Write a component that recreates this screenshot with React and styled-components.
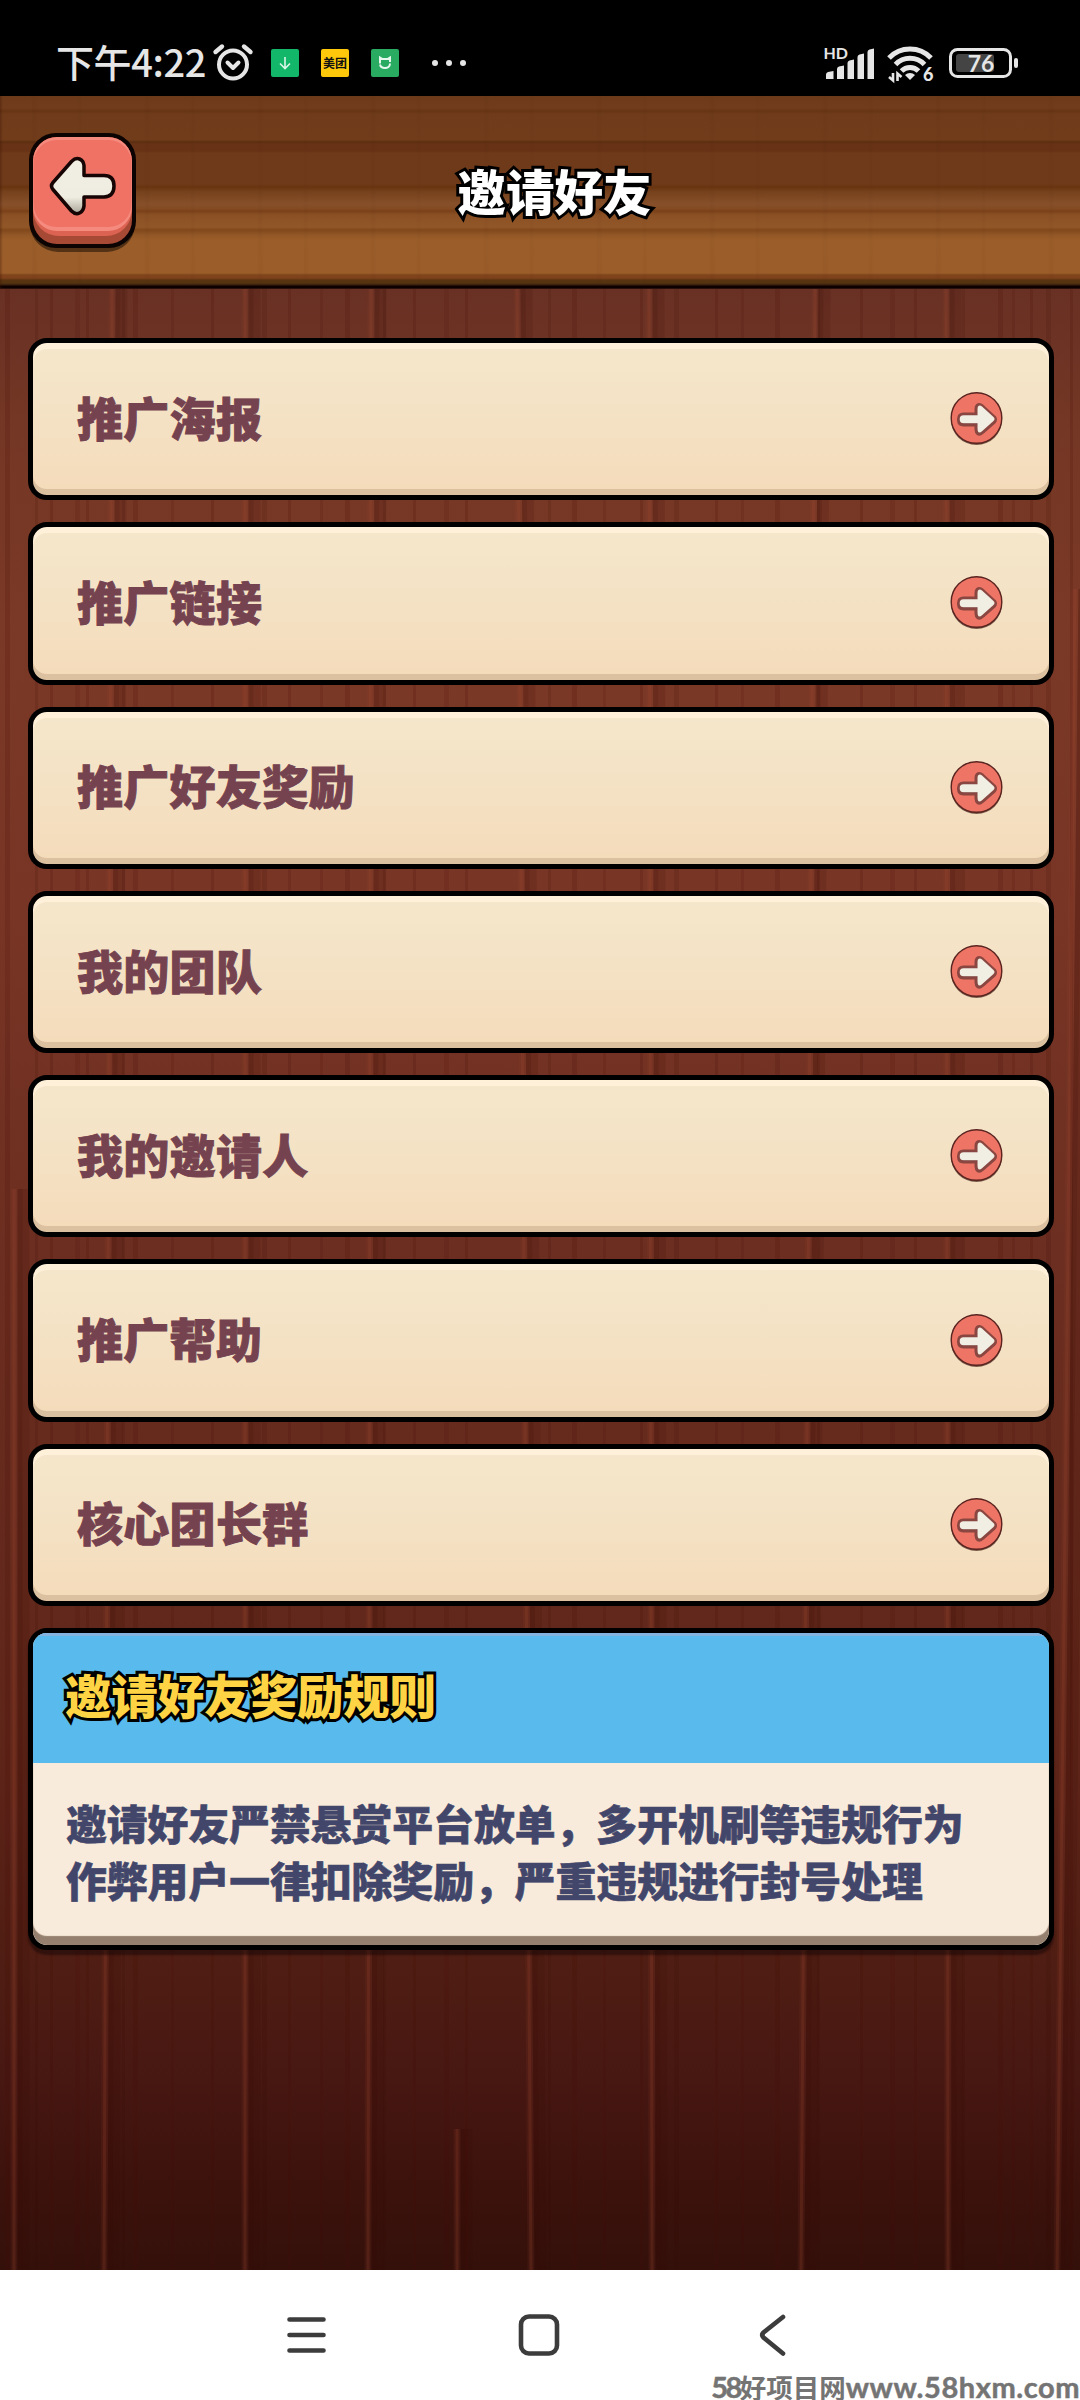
import React from 'react';
import styled, { createGlobalStyle } from 'styled-components';

const GlobalStyle = createGlobalStyle`
  * {
    box-sizing: border-box;
  }
  body {
    margin: 0;
    background: #fff;
    font-family: 'Noto Sans CJK SC', 'Noto Sans', sans-serif;
  }
`;

const Screen = styled.div`
  display: flex;
  flex-direction: column;
  width: 1080px;
  height: 2400px;
`;

const StatusBar = styled.div`
  display: flex;
  align-items: center;
  height: 96px;
  padding: 30px 62px 0 56px;
  background: #000;
  color: #e6e6e6;
  svg {
    display: block;
    flex: none;
    overflow: visible;
  }
`;

const Time = styled.div`
  width: 157px;
  padding-bottom: 4px;
  font-size: 38px;
  line-height: 56px;
  font-weight: 500;
  white-space: nowrap;
  letter-spacing: -0.4px;
`;

const AppBadge = styled.div`
  display: flex;
  align-items: center;
  justify-content: center;
  width: 28px;
  height: 28px;
  margin-left: ${(props) => props.$gap}px;
  border-radius: 2px;
  background: ${(props) => props.$color};
  color: #111;
  font-size: 12px;
  font-weight: 700;
  line-height: 28px;
  white-space: nowrap;
`;

const MoreDots = styled.div`
  display: flex;
  gap: 8px;
  margin-left: 33px;
`;

const Dot = styled.span`
  width: 6px;
  height: 6px;
  border-radius: 50%;
  background: #e6e6e6;
`;

const StatusIcons = styled.div`
  display: flex;
  align-items: center;
  gap: 10px;
  margin-left: auto;
`;

const Header = styled.header`
  display: grid;
  grid-template-columns: 140px 1fr 140px;
  height: 193px;
  padding: 37px 0 0 29px;
  background:
    linear-gradient(90deg, rgba(60, 20, 5, 0.35) 0, rgba(60, 20, 5, 0) 3px),
    repeating-linear-gradient(
      90deg,
      rgba(60, 20, 0, 0) 0 31px,
      rgba(60, 20, 0, 0.035) 33px 35px,
      rgba(60, 20, 0, 0) 38px 77px,
      rgba(60, 20, 0, 0.03) 79px 80px,
      rgba(60, 20, 0, 0) 83px 113px
    ),
    linear-gradient(
      #6d3a19 0,
      #713c1b 12px,
      #673414 15px,
      #6f3b1a 18px,
      #713c1a 44px,
      #5b2d10 46px,
      #673215 48px,
      #673215 55px,
      #6f3a19 57px,
      #6f3a19 88px,
      #683410 91px,
      #74401b 95px,
      #87502a 108px,
      #844b22 113px,
      #7a4119 115px,
      #8b5125 119px,
      #925727 131px,
      #81481c 134px,
      #925726 139px,
      #9b5e2a 144px,
      #9b5d29 177px,
      #80441c 179px,
      #7f421b 182px,
      #5b3410 184px,
      #543411 187px,
      #3a1e0c 189px,
      #0c0100 190px,
      #0c0100 192px,
      #4a211a 193px
    );
`;

const BackButton = styled.button`
  display: block;
  width: 107px;
  height: 120px;
  padding: 0;
  border: none;
  background: none;
  svg {
    display: block;
  }
`;

const Title = styled.h1`
  margin: 0;
  padding: 21px 0 0;
  text-align: center;
  color: #fff;
  font-size: 48.6px;
  line-height: 72px;
  font-weight: 900;
`;

// black rim painted under the fill
const Rim = styled.span`
  display: grid;
  justify-content: ${(props) => props.$align || 'start'};
  -webkit-text-stroke: 6px #000;
  paint-order: stroke fill;
  text-shadow: 0 1px 0 #000;
`;

const MenuRow = styled.div`
  position: relative;
  display: flex;
  align-items: center;
  justify-content: space-between;
  height: 162.3px;
  padding: 0 46px 0 44px;
  border: 5px solid #000;
  border-radius: 19px;
  background: linear-gradient(#f5e7cb, #f4e2c5 45%, #f4dbba);
  box-shadow: inset 0 6px 0 #fff0da, inset 0 -6px 0 #dcc1a0;
`;

const MenuLabel = styled.div`
  padding-bottom: 7px;
  color: #75424f;
  font-size: 46px;
  line-height: 60px;
  font-weight: 900;
  letter-spacing: 0.3px;
  -webkit-text-stroke: 0.9px #75424f;
`;

const Body = styled.main`
  position: relative;
  display: flex;
  flex-direction: column;
  gap: 22px;
  height: 1981px;
  padding: 49px 26px 0 28px;
  background: linear-gradient(
    #693124 0,
    #6d3324 60px,
    #753725 140px,
    #7a3826 330px,
    #783525 620px,
    #6c2e20 960px,
    #62281b 1320px,
    #5c2318 1500px,
    #4f1d13 1680px,
    #471712 1790px,
    #3c120c 1900px,
    #34100b 1981px
  );
`;

const Planks = styled.svg`
  position: absolute;
  left: 0;
  top: 0;
`;

const RuleCard = styled.section`
  position: relative;
  height: 322px;
  border: 5px solid #000;
  border-radius: 19px;
  overflow: hidden;
  background: #f9ebdb;
  box-shadow: 0 5px 2px rgba(20, 5, 5, 0.5);
`;

const RuleTitle = styled.h2`
  height: 130px;
  margin: 0;
  padding: 25px 0 0 32px;
  background: #58baed;
  box-shadow: inset 0 3px 0 #85b3e0;
  color: #ffd444;
  font-size: 46.4px;
  line-height: 72px;
  font-weight: 900;
`;

const RuleText = styled.div`
  height: 182px;
  padding: 31px 32px 0 33px;
  box-shadow: inset 0 -9px 1px #95806f;
  border-radius: 0 0 14px 14px;
  color: #42466a;
  font-size: 40.8px;
  line-height: 57px;
  font-weight: 900;
  white-space: nowrap;
  -webkit-text-stroke: 0.6px #42466a;
`;

const NavBar = styled.nav`
  position: relative;
  display: flex;
  align-items: flex-start;
  height: 130px;
  padding: 40px 0 0 281px;
  gap: 183px;
  background: #fff;
`;

const Watermark = styled.div`
  position: absolute;
  right: 0;
  bottom: 0;
  display: flex;
  align-items: center;
  height: 27px;
  color: #747474;
  font-size: 26.5px;
  line-height: 27px;
  font-weight: 700;
  white-space: nowrap;
`;

const Latin = styled.span`
  font-family: Lato, sans-serif;
  font-size: 29px;
  letter-spacing: ${(props) => props.$spacing}px;
  -webkit-text-stroke: 0.5px #747474;
`;

const menus = [
  '推广海报',
  '推广链接',
  '推广好友奖励',
  '我的团队',
  '我的邀请人',
  '推广帮助',
  '核心团长群',
];

// bright seam between two planks: x at the top, x at the bottom, start y
const seams = [
  [14, 14, 900],
  [112, 104, 0],
  [245, 245, 0],
  [371, 368, 0],
  [517, 531, 0],
  [649, 652, 0],
  [815, 801, 0],
  [946, 948, 0],
  [1075, 1057, 300],
  [457, 457, 1840],
];
// thin grain lines inside the planks
const grain = [
  5, 35, 50, 75, 86, 122, 133, 171, 211, 262, 288, 320, 345, 383, 413, 444, 465,
  548, 572, 603, 640, 674, 715, 741, 775, 817, 860, 890, 914, 962, 998, 1012,
  1030, 1046, 1070,
];

const WoodPlanks = () => (
  <Planks width="1080" height="1981" viewBox="0 0 1080 1981">
    {grain.map((x, i) => (
      <rect
        key={x}
        x={x}
        y="0"
        width={i % 3 === 0 ? 5 : 3}
        height="1981"
        fill={i % 4 === 1 ? '#320800' : '#4a0c06'}
        opacity={i % 2 ? 0.12 : 0.17}
      />
    ))}
    {seams.map(([top, bottom, start]) => (
      <g key={top}>
        <path d={`M${top} ${start}L${bottom} 1981`} stroke="#a04a34" strokeWidth="7" opacity="0.1" />
        <path d={`M${top} ${start}L${bottom} 1981`} stroke="#a3492f" strokeWidth="3" opacity="0.2" />
        <path d={`M${top + 6} ${start}L${bottom + 6} 1981`} stroke="#330600" strokeWidth="5" opacity="0.24" />
        <path d={`M${top + 12} ${start}L${bottom + 12} 1981`} stroke="#330600" strokeWidth="7" opacity="0.12" />
      </g>
    ))}
  </Planks>
);

const AlarmIcon = () => (
  <svg width="40" height="38" viewBox="0 0 40 38" fill="none" stroke="#e6e6e6">
    <circle cx="20" cy="20.500" r="14" strokeWidth="4" />
    <path d="M14.500 18.500l5.500 5.500 5.500-5.500" strokeWidth="4" strokeLinecap="round" strokeLinejoin="round" />
    <path d="M2.500 8L9 2.500M37.500 8L31 2.500" strokeWidth="4.400" strokeLinecap="round" />
  </svg>
);

const SignalIcon = () => (
  <svg width="54" height="40" viewBox="823 43 54 40" fill="#e6e6e6">
    <text x="824.500" y="59" fontSize="16" fontWeight="700" fontFamily="Lato, sans-serif">HD</text>
    <path d="M827 79v-4.500q0-2 2-2.500l5.500-1v8zM838 79v-10q0-2 2-2.500l5-1v13.500zM848.500 79v-16q0-2 2-2.500l4.500-1v19.500zM858.500 79v-22q0-2 2-2.500l4.500-1v25.500zM868.500 79v-27q0-2 2-2.500l4.500-1v30.500z" />
  </svg>
);

const WifiIcon = () => (
  <svg width="52" height="40" viewBox="887 43 52 40" fill="none" stroke="#e6e6e6">
    <path d="M890 58a29 29 0 0 1 42 0" strokeWidth="5" />
    <path d="M896.500 64.500a20 20 0 0 1 29 0" strokeWidth="5" />
    <path d="M902.500 71a12 12 0 0 1 17 0" strokeWidth="5" />
    <path d="M906 75l5 5 5-5a7.500 7.500 0 0 0-10 0z" fill="#e6e6e6" stroke="none" />
    <path d="M894 73v7.500l-4-3.500M898.500 81v-7.500l4 3.500" strokeWidth="2.600" />
    <text x="924" y="81" fontSize="18" fontWeight="900" fill="#e6e6e6" stroke="none" fontFamily="Lato, sans-serif">6</text>
  </svg>
);

const BatteryIcon = () => (
  <svg width="70" height="32" viewBox="948 47 70 32">
    <rect x="950.500" y="49.500" width="60" height="27" rx="7" fill="none" stroke="#e6e6e6" strokeWidth="3" />
    <rect x="956" y="54" width="38" height="18" rx="3" fill="#444" />
    <rect x="1014" y="58" width="4" height="10" rx="2" fill="#e6e6e6" />
    <text x="981" y="72" fontSize="23" fontWeight="700" textAnchor="middle" fill="#e6e6e6" fontFamily="Lato, sans-serif">76</text>
  </svg>
);

const BackIcon = () => (
  <svg width="107" height="120" viewBox="0 0 107 120">
    <defs>
      <linearGradient id="arrowFill" x1="0" y1="0" x2="0" y2="1">
        <stop offset="0" stopColor="#f1eee3" />
        <stop offset="0.7" stopColor="#efece1" />
        <stop offset="1" stopColor="#a9a598" />
      </linearGradient>
      <clipPath id="face">
        <rect x="4" y="4" width="99" height="107" rx="24" />
      </clipPath>
    </defs>
    <rect x="1" y="8" width="105" height="111" rx="28" fill="#2c1a0b" opacity="0.65" />
    <rect x="0" y="0" width="107" height="115" rx="27" fill="#0c0303" />
    <g clipPath="url(#face)">
      <rect x="4" y="4" width="99" height="107" fill="#a64a35" />
      <rect x="4" y="-20" width="99" height="123" rx="26" fill="#dc6352" />
      <rect x="4" y="4" width="99" height="94" rx="24" fill="#f58a7f" />
      <rect x="4.500" y="7" width="98" height="87" rx="23" fill="#ef7265" />
    </g>
    <path
      d="M24 49.500L42.500 28.500q4-4 8-2.500 4 1.500 4.500 6.500v10h20q10 0 10 10.500t-10 11H55v9q-.500 5-4.500 7t-8-2L24 56.500q-3-3.500 0-7z"
      fill="url(#arrowFill)"
      stroke="#160504"
      strokeWidth="3.500"
      strokeLinejoin="round"
    />
  </svg>
);

const GoIcon = () => (
  <svg width="53" height="54" viewBox="0 0 53 54">
    <ellipse cx="26.500" cy="28" rx="25.500" ry="25" fill="#5a3a2c" opacity="0.8" />
    <circle cx="26.500" cy="26" r="25.300" fill="#ee7465" stroke="#5a2420" strokeWidth="1.400" />
    <path
      d="M44.500 25L32.500 14q-3-2.500-5.500-.500-1 1-1 3.500v5H13.500q-5 0-5 5.500t5 5.500H26v4.500q0 3 2 4.500 2 1 4.500-1.500L44.500 30q2-2.500 0-5z"
      fill="#6b3733"
      stroke="#8a4640"
      strokeWidth="3"
      strokeLinejoin="round"
    />
    <path
      d="M43.500 25L32 14.500q-2-1.500-3.500-.500-1 .700-1 3v6.200H13.500q-3.800 0-3.800 4t3.800 4h14v5.500q0 2.500 1 3.500 1.700.700 3.500-1L43.500 29q2-2 0-4z"
      fill="#f1eee3"
    />
  </svg>
);

const App = () => {
  return (
    <>
      <GlobalStyle />
      <Screen>
        <StatusBar>
          <Time>下午4:22</Time>
          <AlarmIcon />
          <AppBadge $color="#12b76a" $gap={18}>
            <svg width="14" height="14" viewBox="0 0 14 14" fill="none" stroke="#d9f6e8" strokeWidth="1.600">
              <path d="M7 1v11M2 7.500l5 5 5-5" />
            </svg>
          </AppBadge>
          <AppBadge $color="#ffc80a" $gap={22}>美团</AppBadge>
          <AppBadge $color="#29ab62" $gap={22}>
            <svg width="14" height="14" viewBox="0 0 14 14" fill="none" stroke="#e6f8ee" strokeWidth="2">
              <path d="M2 7.500V1.500L4.500 3h5L12 1.500v4.500M2 8.500c.500 2.500 2.500 3.500 5 3.500s5-1.500 5-4.500" />
            </svg>
          </AppBadge>
          <MoreDots>
            <Dot />
            <Dot />
            <Dot />
          </MoreDots>
          <StatusIcons>
            <SignalIcon />
            <WifiIcon />
            <BatteryIcon />
          </StatusIcons>
        </StatusBar>
        <Header>
          <BackButton>
            <BackIcon />
          </BackButton>
          <Title>
            <Rim $align="center">邀请好友</Rim>
          </Title>
        </Header>
        <Body>
          <WoodPlanks />
          {menus.map((menu) => (
            <MenuRow key={menu}>
              <MenuLabel>{menu}</MenuLabel>
              <GoIcon />
            </MenuRow>
          ))}
          <RuleCard>
            <RuleTitle>
              <Rim>邀请好友奖励规则</Rim>
            </RuleTitle>
            <RuleText>
              邀请好友严禁悬赏平台放单，多开机刷等违规行为
              <br />
              作弊用户一律扣除奖励，严重违规进行封号处理
            </RuleText>
          </RuleCard>
        </Body>
        <NavBar>
          <svg width="50" height="50" viewBox="0 0 50 50" stroke="#3c3c3c" strokeWidth="4.600" strokeLinecap="round">
            <path d="M8.500 9.500h34M8.500 25h34M8.500 40.500h34" />
          </svg>
          <svg width="50" height="50" viewBox="0 0 50 50" fill="none" stroke="#3c3c3c" strokeWidth="4.600">
            <rect x="7" y="6.500" width="36" height="37" rx="8" />
          </svg>
          <svg width="50" height="50" viewBox="0 0 50 50" fill="none" stroke="#3c3c3c" strokeWidth="4.600" strokeLinecap="round">
            <path d="M36 7L16.500 22.500q-2.500 2.500 0 5L36 43.500" />
          </svg>
          <Watermark>
            <Latin $spacing={-2.6}>58</Latin>
            好项目网
            <Latin $spacing={0.55}>www.58hxm.com</Latin>
          </Watermark>
        </NavBar>
      </Screen>
    </>
  );
};

export default App;
